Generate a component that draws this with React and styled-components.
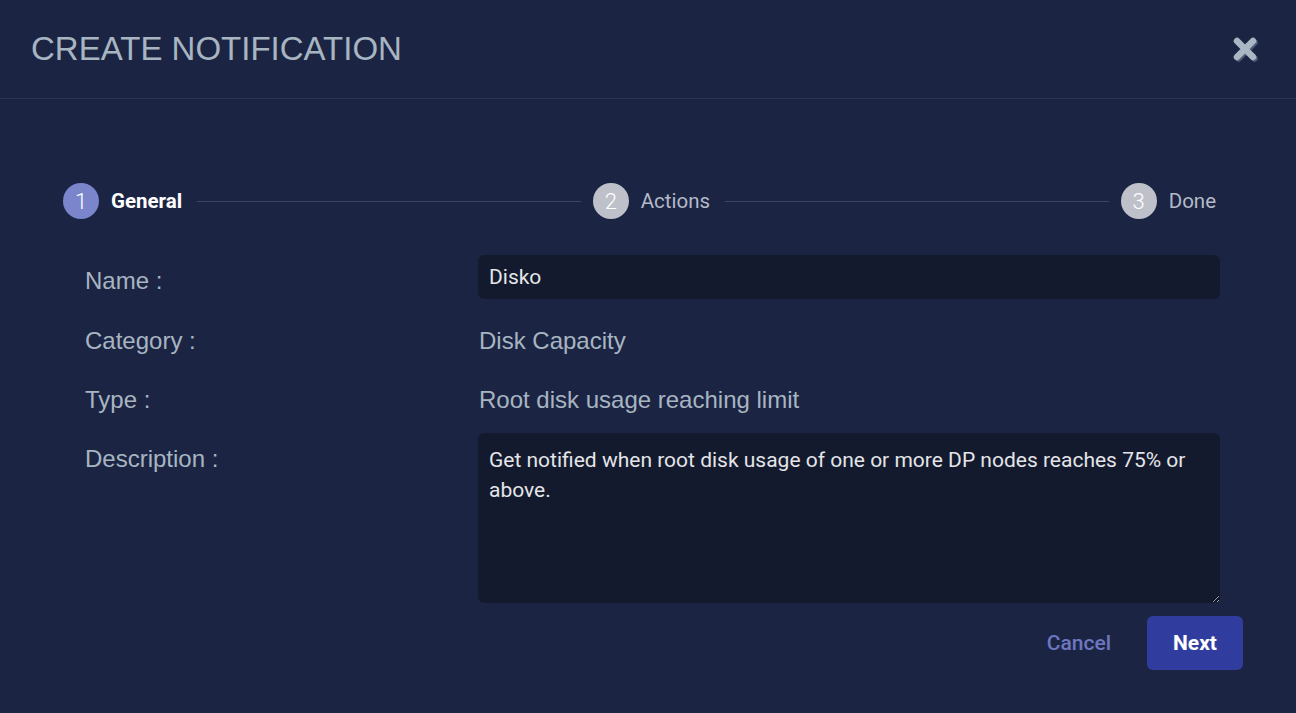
import { Fragment } from "react";
import styled, { createGlobalStyle } from "styled-components";

const GlobalStyle = createGlobalStyle`
  html, body {
    margin: 0;
    padding: 0;
    background: #1c2444;
  }
  * {
    box-sizing: border-box;
  }
`;

const Modal = styled.div`
  width: 1296px;
  height: 713px;
  background: #1c2444;
  overflow: hidden;
`;

const Header = styled.div`
  height: 99px;
  display: flex;
  align-items: center;
  justify-content: space-between;
  padding: 0 37px 0 31px;
  border-bottom: 1px solid #2b3453;
`;

const Title = styled.h1`
  margin: 0;
  font-family: "Liberation Sans", Arial, sans-serif;
  font-weight: 400;
  font-size: 33px;
  color: #a7b5c1;
`;

const CloseButton = styled.button`
  border: none;
  background: none;
  padding: 0;
  width: 28px;
  height: 28px;
  cursor: pointer;
  display: flex;
`;

const Body = styled.div`
  padding: 84px 53px 0 63px;
`;

const Stepper = styled.div`
  display: flex;
  align-items: center;
  height: 36px;
  margin-right: 27px;
`;

const Step = styled.div`
  display: flex;
  align-items: center;
  gap: 12px;
`;

const Circle = styled.div`
  width: 36px;
  height: 36px;
  border-radius: 50%;
  background: ${(p) => (p.$active ? "#7a85cc" : "#bfc1ca")};
  color: #ffffff;
  font-family: Roboto, sans-serif;
  font-weight: 300;
  font-size: 22px;
  display: flex;
  align-items: center;
  justify-content: center;
`;

const StepLabel = styled.span`
  font-family: Roboto, sans-serif;
  font-size: 20.5px;
  font-weight: ${(p) => (p.$active ? 700 : 400)};
  color: ${(p) => (p.$active ? "#ffffff" : "#b3bac7")};
`;

const Line = styled.div`
  flex: 1;
  height: 1px;
  background: #3b4466;
  margin: 0 12px 0 15px;
`;

const Form = styled.div`
  margin-top: 36px;
  padding-left: 22px;
  margin-right: 23px;
`;

const Row = styled.div`
  display: grid;
  grid-template-columns: 393px 1fr;
  align-items: start;
  margin-bottom: ${(p) => p.$gap || 0}px;
`;

const Label = styled.div`
  font-family: "Liberation Sans", Arial, sans-serif;
  font-size: 24px;
  color: #a7b5c1;
  line-height: 44px;
  padding-top: 4px;
`;

const Value = styled.div`
  font-family: "Liberation Sans", Arial, sans-serif;
  font-size: 24px;
  color: #a7b5c1;
  line-height: 44px;
  padding-top: 4px;
  padding-left: 1px;
`;

const Input = styled.input`
  width: 100%;
  height: 44px;
  border: none;
  border-radius: 6px;
  background: #131a2e;
  color: #e4e5e8;
  font-family: Roboto, sans-serif;
  font-size: 21px;
  padding: 0 11px;
  outline: none;
`;

const TextArea = styled.textarea`
  width: 100%;
  height: 170px;
  border: none;
  border-radius: 6px;
  background: #131a2e;
  color: #e4e5e8;
  font-family: Roboto, sans-serif;
  font-size: 21px;
  line-height: 30px;
  padding: 12px 11px;
  outline: none;
  resize: vertical;
  display: block;
`;

const Actions = styled.div`
  display: flex;
  justify-content: flex-end;
  align-items: center;
  gap: 11px;
  margin-top: 13px;
  margin-right: -23px;
`;

const CancelButton = styled.button`
  border: none;
  background: none;
  font-family: Roboto, sans-serif;
  font-weight: 500;
  font-size: 21px;
  color: #6c77c0;
  padding: 0 25px;
  height: 54px;
  cursor: pointer;
`;

const NextButton = styled.button`
  border: none;
  border-radius: 6px;
  background: #303d9f;
  font-family: Roboto, sans-serif;
  font-weight: 700;
  font-size: 21px;
  color: #ffffff;
  width: 96px;
  height: 54px;
  cursor: pointer;
`;

const CloseIcon = () => (
  <svg width="28" height="28" viewBox="0 0 28 28">
    <g strokeLinecap="round" strokeWidth="6.5">
      <path d="M6 6 L22 22 M22 6 L6 22" stroke="#4f5a78" transform="translate(1.5 1.5)" />
      <path d="M6 6 L22 22 M22 6 L6 22" stroke="#a9b7c2" />
    </g>
  </svg>
);

const steps = ["General", "Actions", "Done"];

export default function App() {
  return (
    <Modal>
      <GlobalStyle />
      <Header>
        <Title>CREATE NOTIFICATION</Title>
        <CloseButton aria-label="Close">
          <CloseIcon />
        </CloseButton>
      </Header>
      <Body>
        <Stepper>
          {steps.map((s, i) => (
            <Fragment key={s}>
              {i > 0 && <Line />}
              <Step>
                <Circle $active={i === 0}>{i + 1}</Circle>
                <StepLabel $active={i === 0}>{s}</StepLabel>
              </Step>
            </Fragment>
          ))}
        </Stepper>
        <Form>
          <Row $gap={12}>
            <Label>Name :</Label>
            <Input defaultValue="Disko" />
          </Row>
          <Row $gap={11}>
            <Label>Category :</Label>
            <Value>Disk Capacity</Value>
          </Row>
          <Row $gap={11}>
            <Label>Type :</Label>
            <Value>Root disk usage reaching limit</Value>
          </Row>
          <Row>
            <Label>Description :</Label>
            <TextArea defaultValue="Get notified when root disk usage of one or more DP nodes reaches 75% or above." />
          </Row>
          <Actions>
            <CancelButton>Cancel</CancelButton>
            <NextButton>Next</NextButton>
          </Actions>
        </Form>
      </Body>
    </Modal>
  );
}
